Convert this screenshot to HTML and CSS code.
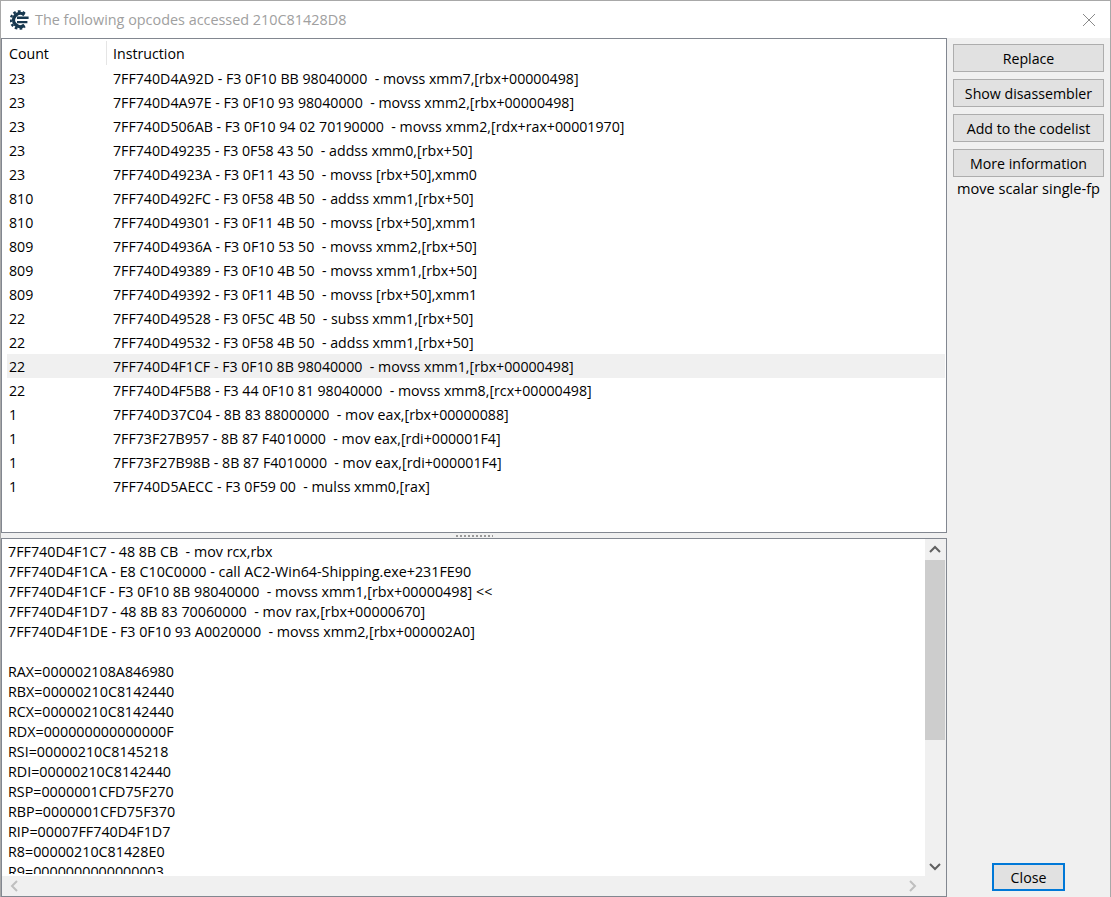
FILE: index.html
```html
<!DOCTYPE html>
<html lang="en">
  <head>
    <meta charset="utf-8" />
    <title>The following opcodes accessed 210C81428D8</title>
    <link rel="stylesheet" href="styles.css">
  </head>
  <body>
    <div class="window">
      <div class="titlebar">
        <svg class="app-icon" width="20" height="20" viewBox="0 0 20 20">
          <path d="M14.4 4.9 A6.6 6.6 0 1 0 14.4 15.1" fill="none" stroke="#17384f" stroke-width="3.4" />
          <path d="M14.8 3.4 A8.6 8.6 0 1 0 14.8 16.6" fill="none" stroke="#17384f" stroke-width="2.4" stroke-dasharray="2.6 2.1" />
          <path d="M7 6.6 H18.6 V9 H7 Z M7 11 H17.4 V13.2 H7 Z" fill="#17384f" />
        </svg>
        <span class="title">The following opcodes accessed 210C81428D8</span>
        <svg class="close-x" width="14" height="14" viewBox="0 0 14 14">
          <path d="M1 1 L13 13 M13 1 L1 13" stroke="#8a8a8a" stroke-width="1" fill="none" />
        </svg>
      </div>
      <div class="content">
        <div class="left">
          <div class="list">
            <div class="list-head">
              <div class="col-count">Count</div>
              <div class="col-instr">Instruction</div>
            </div>
            <div class="row"><span class="col-count">23</span><span class="col-instr">7FF740D4A92D - F3 0F10 BB 98040000  - movss xmm7,[rbx+00000498]</span></div>
            <div class="row"><span class="col-count">23</span><span class="col-instr">7FF740D4A97E - F3 0F10 93 98040000  - movss xmm2,[rbx+00000498]</span></div>
            <div class="row"><span class="col-count">23</span><span class="col-instr">7FF740D506AB - F3 0F10 94 02 70190000  - movss xmm2,[rdx+rax+00001970]</span></div>
            <div class="row"><span class="col-count">23</span><span class="col-instr">7FF740D49235 - F3 0F58 43 50  - addss xmm0,[rbx+50]</span></div>
            <div class="row"><span class="col-count">23</span><span class="col-instr">7FF740D4923A - F3 0F11 43 50  - movss [rbx+50],xmm0</span></div>
            <div class="row"><span class="col-count">810</span><span class="col-instr">7FF740D492FC - F3 0F58 4B 50  - addss xmm1,[rbx+50]</span></div>
            <div class="row"><span class="col-count">810</span><span class="col-instr">7FF740D49301 - F3 0F11 4B 50  - movss [rbx+50],xmm1</span></div>
            <div class="row"><span class="col-count">809</span><span class="col-instr">7FF740D4936A - F3 0F10 53 50  - movss xmm2,[rbx+50]</span></div>
            <div class="row"><span class="col-count">809</span><span class="col-instr">7FF740D49389 - F3 0F10 4B 50  - movss xmm1,[rbx+50]</span></div>
            <div class="row"><span class="col-count">809</span><span class="col-instr">7FF740D49392 - F3 0F11 4B 50  - movss [rbx+50],xmm1</span></div>
            <div class="row"><span class="col-count">22</span><span class="col-instr">7FF740D49528 - F3 0F5C 4B 50  - subss xmm1,[rbx+50]</span></div>
            <div class="row"><span class="col-count">22</span><span class="col-instr">7FF740D49532 - F3 0F58 4B 50  - addss xmm1,[rbx+50]</span></div>
            <div class="row selected"><span class="col-count">22</span><span class="col-instr">7FF740D4F1CF - F3 0F10 8B 98040000  - movss xmm1,[rbx+00000498]</span></div>
            <div class="row"><span class="col-count">22</span><span class="col-instr">7FF740D4F5B8 - F3 44 0F10 81 98040000  - movss xmm8,[rcx+00000498]</span></div>
            <div class="row"><span class="col-count">1</span><span class="col-instr">7FF740D37C04 - 8B 83 88000000  - mov eax,[rbx+00000088]</span></div>
            <div class="row"><span class="col-count">1</span><span class="col-instr">7FF73F27B957 - 8B 87 F4010000  - mov eax,[rdi+000001F4]</span></div>
            <div class="row"><span class="col-count">1</span><span class="col-instr">7FF73F27B98B - 8B 87 F4010000  - mov eax,[rdi+000001F4]</span></div>
            <div class="row"><span class="col-count">1</span><span class="col-instr">7FF740D5AECC - F3 0F59 00  - mulss xmm0,[rax]</span></div>
          </div>
          <div class="splitter"><div class="grip"></div></div>
          <div class="details">
            <div class="details-main">
              <div class="details-text">
                <div class="line">7FF740D4F1C7 - 48 8B CB  - mov rcx,rbx</div>
                <div class="line">7FF740D4F1CA - E8 C10C0000 - call AC2-Win64-Shipping.exe+231FE90</div>
                <div class="line">7FF740D4F1CF - F3 0F10 8B 98040000  - movss xmm1,[rbx+00000498] &lt;&lt;</div>
                <div class="line">7FF740D4F1D7 - 48 8B 83 70060000  - mov rax,[rbx+00000670]</div>
                <div class="line">7FF740D4F1DE - F3 0F10 93 A0020000  - movss xmm2,[rbx+000002A0]</div>
                <div class="line">&nbsp;</div>
                <div class="line">RAX=000002108A846980</div>
                <div class="line">RBX=00000210C8142440</div>
                <div class="line">RCX=00000210C8142440</div>
                <div class="line">RDX=000000000000000F</div>
                <div class="line">RSI=00000210C8145218</div>
                <div class="line">RDI=00000210C8142440</div>
                <div class="line">RSP=0000001CFD75F270</div>
                <div class="line">RBP=0000001CFD75F370</div>
                <div class="line">RIP=00007FF740D4F1D7</div>
                <div class="line">R8=00000210C81428E0</div>
                <div class="line">R9=0000000000000003</div>
              </div>
              <div class="vscroll">
                <svg class="arrow" width="20" height="20" viewBox="0 0 20 20"><path d="M5 13 L10 8 L15 13" fill="none" stroke="#606060" stroke-width="2" /></svg>
                <div class="vtrack"><div class="vthumb"></div></div>
                <svg class="arrow" width="20" height="20" viewBox="0 0 20 20"><path d="M5 8 L10 13 L15 8" fill="none" stroke="#606060" stroke-width="2" /></svg>
              </div>
            </div>
            <div class="hscroll">
              <svg width="20" height="20" viewBox="0 0 20 20"><path d="M15 5 L10 10 L15 15" fill="none" stroke="#bfbfbf" stroke-width="2" /></svg>
              <svg width="20" height="20" viewBox="0 0 20 20"><path d="M5 5 L10 10 L5 15" fill="none" stroke="#bfbfbf" stroke-width="2" /></svg>
            </div>
          </div>
        </div>
        <div class="side">
          <button class="btn">Replace</button>
          <button class="btn">Show disassembler</button>
          <button class="btn">Add to the codelist</button>
          <button class="btn">More information</button>
          <div class="hint">move scalar single-fp</div>
          <button class="btn close">Close</button>
        </div>
      </div>
    </div>
  </body>
</html>
```

FILE: styles.css
```css
* {
  box-sizing: border-box;
}
html, body {
  margin: 0;
  height: 100%;
  overflow: hidden;
}
body {
  font-family: "Open Sans", "Noto Sans", sans-serif;
  font-size: 14.2px;
  color: #000;
}
.window {
  height: 897px;
  display: flex;
  flex-direction: column;
  border: 1px solid #a8a8a8;
  border-bottom: 0;
  background-color: #f0f0f0;
}
.titlebar {
  height: 37px;
  flex: none;
  display: flex;
  align-items: center;
  background-color: white;
  padding: 0 14px 0 9px;
  gap: 5px;
}
.title {
  color: #a0a0a0;
  flex: 1;
  font-size: 14.4px;
}
.content {
  flex: 1;
  display: flex;
  min-height: 0;
}
.left {
  width: 946px;
  flex: none;
  display: flex;
  flex-direction: column;
}
.list {
  height: 495px;
  flex: none;
  background-color: white;
  border: 1px solid #828790;
  padding: 0 1px 0 5px;
}
.list-head {
  display: flex;
  height: 27px;
  align-items: center;
}
.list-head .col-count {
  height: 24px;
  line-height: 26px;
}
.list-head .col-instr {
  border-left: 1px solid #e5e5e5;
  height: 24px;
  line-height: 26px;
  padding-left: 6px;
}
.col-count {
  width: 99px;
  padding-left: 2px;
  flex: none;
}
.row {
  display: flex;
  height: 24px;
  line-height: 26px;
  white-space: pre;
}
.row .col-instr {
  padding-left: 7px;
}
.selected {
  background-color: #f0f0f0;
}
.splitter {
  height: 5px;
  flex: none;
  display: flex;
  justify-content: center;
  align-items: center;
}
.grip {
  width: 38px;
  height: 2px;
  background-image: radial-gradient(#999 40%, transparent 50%);
  background-size: 4px 2px;
}
.details {
  flex: 1;
  min-height: 0;
  background-color: white;
  border: 1px solid #828790;
  display: flex;
  flex-direction: column;
}
.details-main {
  flex: 1;
  min-height: 0;
  display: flex;
}
.details-text {
  flex: 1;
  overflow: hidden;
  margin-bottom: 2px;
  padding: 3px 0 0 6px;
  font-size: 14.3px;
}
.line {
  height: 20px;
  line-height: 20px;
  white-space: pre;
}
.vscroll {
  width: 21px;
  flex: none;
  display: flex;
  flex-direction: column;
  background-color: #f0f0f0;
}
.vtrack {
  flex: 1;
}
.vthumb {
  height: 180px;
  margin: 1px 1px 0 0;
  background-color: #cdcdcd;
}
.arrow {
  flex: none;
}
.hscroll {
  height: 20px;
  flex: none;
  display: flex;
  justify-content: space-between;
  background-color: #f0f0f0;
  padding-right: 21px;
}
.side {
  flex: 1;
  display: flex;
  flex-direction: column;
  padding: 6px 6px 6px 6px;
  gap: 7px;
}
.btn {
  height: 28px;
  flex: none;
  font: inherit;
  font-size: 14.2px;
  color: #000;
  background-color: #e1e1e1;
  border: 1px solid #adadad;
  padding: 1px 0 0 0;
}
.hint {
  margin-top: -6px;
  text-align: center;
  white-space: nowrap;
  font-size: 14.6px;
}
.close {
  width: 73px;
  align-self: center;
  margin-top: auto;
  border: 2px solid #0078d7;
}
```
